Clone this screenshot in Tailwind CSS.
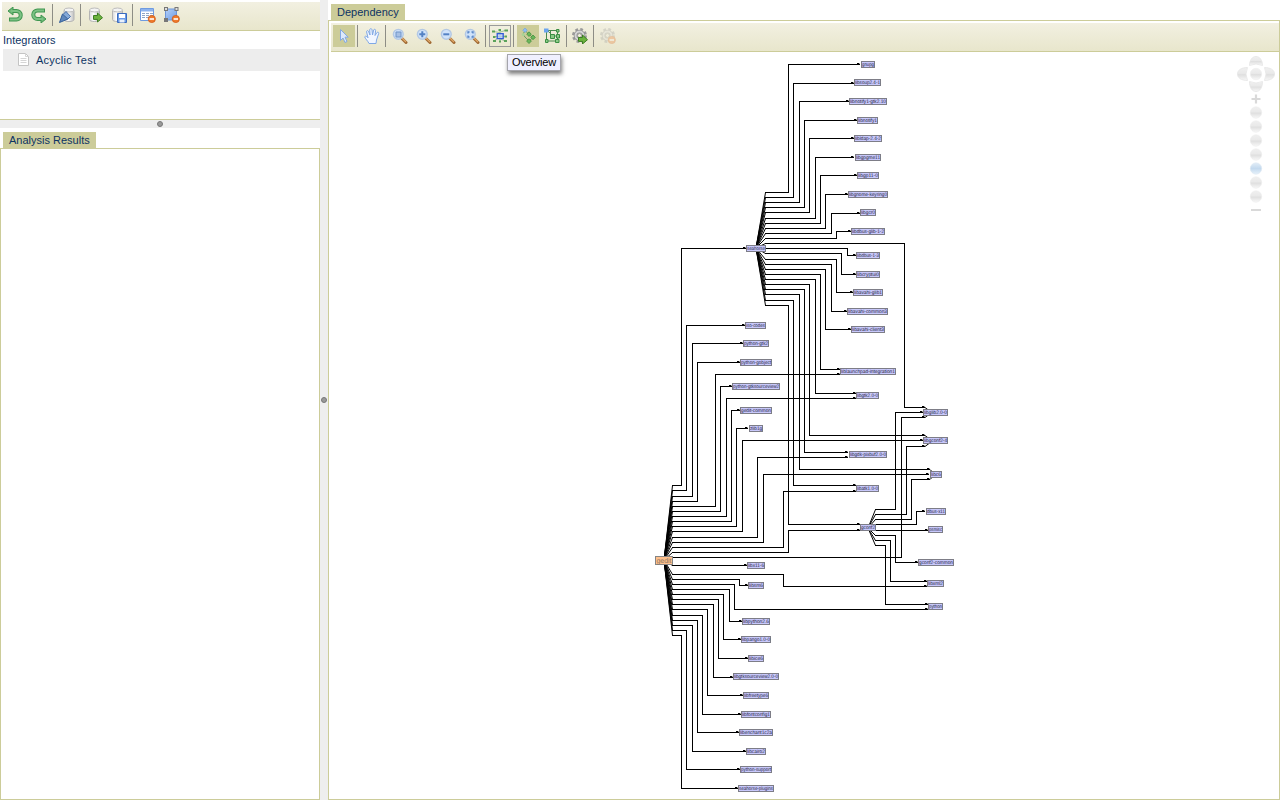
<!DOCTYPE html>
<html lang="en">
<head>
<meta charset="utf-8">
<title>Dependency</title>
<script src="https://cdn.jsdelivr.net/npm/@tailwindcss/browser@4"></script>
</head>
<body class="w-[1280px] h-[800px] overflow-hidden bg-white font-['Liberation_Sans',Arial,sans-serif] text-[11px] leading-[14px] text-[#0d3363]">
<svg width="0" height="0" class="absolute">
  <defs>
    <linearGradient id="gy" x1="0" y1="0" x2="1" y2="0"><stop offset="0" stop-color="#d8d8d8"/><stop offset=".4" stop-color="#fff"/><stop offset="1" stop-color="#c0c0c0"/></linearGradient>
    <linearGradient id="bl" x1="0" y1="0" x2="1" y2="1"><stop offset="0" stop-color="#b4d0f8"/><stop offset="1" stop-color="#6f9de6"/></linearGradient>
    <linearGradient id="ball" x1="0" y1="0" x2="0" y2="1"><stop offset="0" stop-color="#f0f0f0"/><stop offset=".45" stop-color="#e9e9e9"/><stop offset=".55" stop-color="#dfdfdf"/><stop offset="1" stop-color="#f8f8f8"/></linearGradient>
    <linearGradient id="ballb" x1="0" y1="0" x2="0" y2="1"><stop offset="0" stop-color="#e2edf7"/><stop offset=".5" stop-color="#c3d9ee"/><stop offset="1" stop-color="#e6f1fa"/></linearGradient>
    <g id="db"><path d="M1.500 3.500v9c0 1.300 2.200 2 5 2s5-.7 5-2v-9" fill="url(#gy)" stroke="#b4b4b4"/><ellipse cx="6.500" cy="3" rx="5" ry="2" fill="#f4f4f4" stroke="#bcbcbc"/></g>
    <g id="lens"><path d="M10 10.500l4 4" stroke="#a06a34" stroke-width="3" stroke-linecap="round"/><path d="M10 10l4 4" stroke="#e0a868" stroke-width="1.200"/><circle cx="6.300" cy="6.300" r="4.900" fill="#cfe2fa" stroke="#b3c8e4" stroke-width="1.400"/></g>
    <g id="minus"><circle cx="11.800" cy="12" r="3.600" fill="#ee7a2c" stroke="#d35a14" stroke-width=".8"/><path d="M9.600 12h4.400" stroke="#fff" stroke-width="1.600"/></g>
    <g id="gear"><circle cx="7.500" cy="7.500" r="6.200" fill="none" stroke="#9a9a9a" stroke-width="2.600" stroke-dasharray="2.700 2.170"/><circle cx="7.500" cy="7.500" r="4" fill="none" stroke="#8f8f8f" stroke-width="3.600"/><circle cx="7.500" cy="7.500" r="4" fill="none" stroke="#d6d6d6" stroke-width="2"/><circle cx="7.500" cy="7.500" r="2" fill="#f0eedc" stroke="#888" stroke-width=".8"/></g>
    <g id="go"><path d="M6.500 9.500h4V7l5 4.700-5 4.300v-2.600h-4z" fill="#6cb33e" stroke="#3c7d22"/></g>
    <g id="turn"><path d="M3.500 4h6a4 4 0 0 1 0 8.500H2" fill="none" stroke="#3f9650" stroke-width="4"/><path d="M6 0v8L1 4z" fill="#6fb877" stroke="#3f9650"/><path d="M4 4h5.500a4 4 0 0 1 0 8.500H3" fill="none" stroke="#7cc184" stroke-width="2.200"/></g>
  </defs>
</svg>
<div class="flex h-[800px]">
  <aside class="flex w-[320px] flex-col">
    <div class="mt-[2px] ml-[2px] flex h-[29px] items-center border-b border-[#cccc99] bg-linear-to-b from-[#f2f0e1] to-[#e8e6cc] pl-[5px] pb-[2px]">
      <svg class="w-4 h-4" viewBox="0 0 16 16"><use href="#turn"/></svg>
      <svg class="ml-[8px] w-4 h-4" viewBox="0 0 16 16"><use href="#turn" transform="translate(16 16) rotate(180) translate(0 16) scale(1 -1) scale(1 -1) translate(0 -16)"/></svg>
      <i class="ml-[5px] h-[22px] w-px bg-[#8d8d85]"></i>
      <svg class="ml-[6px] w-4 h-4" viewBox="0 0 16 16"><use href="#db" x="3.500"/><path d="M.5 15.500l3-8.500 5.500 5z" fill="#5f87bb" stroke="#345f99"/><path d="M4 7.500l3-3 4.500 5-2.500 2.500z" fill="#85a9d8" stroke="#4770a8"/></svg>
      <i class="ml-[5px] h-[22px] w-px bg-[#8d8d85]"></i>
      <svg class="ml-[7px] w-4 h-4" viewBox="0 0 16 16"><use href="#db"/><use href="#go" x="-1" y="-1"/></svg>
      <svg class="ml-[7px] w-4 h-4" viewBox="0 0 16 16"><use href="#db"/><path d="M6.500 6.500h9v9h-9z" fill="#6b9be8" stroke="#3c6cbd"/><path d="M8 7h6v4H8z" fill="#fff"/><path d="M8.500 12.500h5v3h-5z" fill="#e8f0fb"/></svg>
      <i class="ml-[5px] h-[22px] w-px bg-[#8d8d85]"></i>
      <svg class="ml-[7px] w-4 h-4" viewBox="0 0 16 16"><path d="M.5 1.500h13v12H.5z" fill="#fff" stroke="#6f9be0"/><path d="M1 2h12v2.500H1z" fill="#8db3ee"/><path d="M2 6.500h3m1 0h3m1 0h3m-11 2h3m1 0h3m1 0h3m-11 2h3m1 0h3" stroke="#8fa5c5"/><use href="#minus"/></svg>
      <svg class="ml-[8px] w-4 h-4" viewBox="0 0 16 16"><path d="M1.500 2h11v11h-11z" fill="url(#bl)" stroke="#6c95da"/><path d="M0 0h4v4H0zM10.500 0h4v4h-4zM0 11h4v4H0z" fill="#777"/><path d="M1 1h2v2H1zM11.500 1h2v2h-2z" fill="#ddd"/><use href="#minus"/></svg>
    </div>
    <div class="h-[18px] pt-[2px] pl-[3px]">Integrators</div>
    <div class="ml-[3px] flex h-[22px] items-center bg-[#ededed] pl-[15px]">
      <svg class="w-[11px] h-[13px] -mt-px" viewBox="0 0 11 13"><path d="M.5.500h7l3 3v9H.5z" fill="#fff" stroke="#c4c4c4"/><path d="M7.500.500v3h3M2.500 5.500h6m-6 2h6m-6 2h6" fill="none" stroke="#d5d5d5"/></svg>
      <span class="ml-[7px] tracking-[0.25px]">Acyclic Test</span>
    </div>
    <div class="h-[49px] border-b border-[#cccc99]"></div>
    <div class="flex h-[8px] items-center justify-center bg-[#eee]"><i class="h-[6px] w-[6px] rounded-full border border-[#777] bg-[#999]"></i></div>
    <div class="flex h-[20px] pt-[4px] pl-[3px]"><span class="h-[16px] w-[93px] bg-[#cccc99] pt-[1px] pl-[6px]">Analysis Results</span></div>
    <div class="flex-1 border border-[#cccc99]"></div>
  </aside>
  <div class="flex w-[8px] items-center justify-center bg-[#eee]"><i class="h-[6px] w-[6px] rounded-full border border-[#777] bg-[#999]"></i></div>
  <main class="flex w-[952px] flex-col">
    <div class="flex h-[20px] pt-[4px] pl-[3px]"><span class="h-[16px] w-[74px] bg-[#cccc99] pt-[1px] pl-[6px]">Dependency</span></div>
    <div class="relative flex-1 border border-[#cccc99]">
      <div class="mt-[2px] ml-[2px] flex h-[29px] items-center border-b border-[#cccc99] bg-linear-to-b from-[#f2f0e1] to-[#e8e6cc] pl-[2px] pb-[2px]">
        <div class="flex h-[22px] w-[22px] items-center justify-center bg-[#cccc99]"><svg class="w-4 h-4" viewBox="0 0 16 16"><path d="M4.500 1.500v11l2.500-2.500 2 4.500 2-1-2-4.300h3.200z" fill="#dce9fc" stroke="#83a9e2"/></svg></div>
        <i class="ml-[2px] h-[22px] w-px bg-[#8d8d85]"></i>
        <svg class="ml-[6px] w-4 h-4" viewBox="0 0 16 16"><path d="M5 15.500C4 13 1 10.500.7 8.800c.8-1.300 2.300-.3 3.300 1L2.500 3.500c.5-1.300 1.700-1 2.200.3L6 7 5.700 1.700C6 .300 7.700.300 8 1.700L8.500 7l1.200-5c.5-1.300 2-.8 1.900.5L11 7.500l2-3c.9-.8 2 0 1.700 1L12.500 12l-.5 3.500z" fill="#f1f6ff" stroke="#7fa8e6"/></svg>
        <i class="ml-[5px] h-[22px] w-px bg-[#8d8d85]"></i>
        <svg class="ml-[6px] w-4 h-4" viewBox="0 0 16 16"><use href="#lens"/><path d="M4 4h5v5H4z" fill="#a7c0e4" stroke="#6f94c8"/></svg>
        <svg class="ml-[8px] w-4 h-4" viewBox="0 0 16 16"><use href="#lens"/><path d="M3.300 6.300h6m-3-3v6" stroke="#5482c4" stroke-width="2"/></svg>
        <svg class="ml-[8px] w-4 h-4" viewBox="0 0 16 16"><use href="#lens"/><path d="M3.300 6.300h6" stroke="#5482c4" stroke-width="2"/></svg>
        <svg class="ml-[8px] w-4 h-4" viewBox="0 0 16 16"><use href="#lens"/><path d="M4 5.500V4h1.500M7.500 4H9v1.500M9 7.500V9H7.500M5.500 9H4V7.500" fill="none" stroke="#5482c4" stroke-width="1.300"/></svg>
        <i class="ml-[5px] h-[22px] w-px bg-[#8d8d85]"></i>
        <div class="ml-[3px] flex h-[22px] w-[22px] items-center justify-center border border-[#9b9b9b]"><svg class="w-4 h-4 shrink-0" viewBox="0 0 16 16"><path d="M2 3.500l5 1 6-2M2 13l4-3 7 3M2 8.500h11M8 2v12" fill="none" stroke="#9fc39c"/><path d="M0 2.500h3v2H0zM6.500 1h2.500v2H6.500zM12.500 1.500H16v2h-3.500zM1 12h3v2H1zM1 8h2.500v2H1zM12.500 7.500H15v2h-2.500zM7 12.500h2v2H7zM12 12h3v2h-3z" fill="#5aa35a"/><path d="M5.200 5.700h6v5h-6z" fill="#b9cdf8" fill-opacity=".7" stroke="#2f5bd6" stroke-width="1.300"/></svg></div>
        <i class="ml-[2px] h-[22px] w-px bg-[#8d8d85]"></i>
        <div class="ml-[3px] flex h-[22px] w-[22px] items-center justify-center bg-[#cccc99]"><svg class="w-4 h-4" viewBox="0 0 16 16"><path d="M5 2.500L3 6.500 5 9l4 4M5.500 3L9 6.500l4 3-4 3.500" fill="none" stroke="#6a9a60"/><path d="M5 0l2.200 2.200L5 4.500 2.800 2.200z" fill="#8fbef4" stroke="#6aa0e0" stroke-width=".6"/><circle cx="3.200" cy="6.500" r="1.500" fill="#a9d497"/><path d="M9 3.800l2.300 2.400L9 8.500 6.800 6.200zM13 7l2.300 2.400L13 11.700l-2.200-2.300zM9 10.700l2.400 2.400L9 15.500l-2.400-2.400z" fill="#6bb65b" stroke="#3f8f3c" stroke-width=".8"/></svg></div>
        <svg class="ml-[5px] w-4 h-4" viewBox="0 0 16 16"><path d="M4 2.500h9.500V13H3M2.500 4v9M4 3l5 5h5M6.500 3v5" fill="none" stroke="#478a4c"/><path d="M0 .500h4.500v4H0z" fill="#6ba4ef"/><path d="M6.500 6.500h4v4h-4zM12.500 1.500h2.500v2.500h-2.500zM12.500 6.500h3v3.500h-3zM1.500 11.500H4v3H1.500zM11.500 11.500h3.500v3h-3.500z" fill="#8cca86" stroke="#3a8e43"/></svg>
        <i class="ml-[6px] h-[22px] w-px bg-[#8d8d85]"></i>
        <svg class="ml-[5px] w-4 h-4" viewBox="0 0 16 16"><use href="#gear"/><use href="#go"/></svg>
        <i class="ml-[5px] h-[22px] w-px bg-[#8d8d85]"></i>
        <svg class="ml-[6px] w-4 h-4 opacity-30" viewBox="0 0 16 16"><use href="#gear"/><use href="#minus"/></svg>
      </div>
      <svg id="graph" class="absolute -top-[21px] -left-[329px] h-[800px] w-[1280px] font-['Liberation_Sans',Arial,sans-serif]" viewBox="0 0 1280 800"></svg>
      <div class="absolute top-[33px] left-[178px] h-[17px] w-[54px] border border-[#a5a5ac] bg-[#f0f0ff] pl-1 tracking-[-0.25px] text-black shadow-[1px_3px_4px_rgba(0,0,0,0.5)]">Overview</div>
    </div>
  </main>
</div>
<script>
const NS = 'http://www.w3.org/2000/svg', svg = document.getElementById('graph');
function add(tag, attrs, text) {
  const e = document.createElementNS(NS, tag);
  for (const k in attrs) e.setAttribute(k, attrs[k]);
  if (text) e.textContent = text;
  svg.appendChild(e);
}
// Edge bundles: source centre, fan x, then [exit y, bend x, target y, target x]
const bundles = [
  [756, 248, 765, [[192,788,64,860],[197,793,83,854],[202,799,101,849],[207,804,120,857],[212,809,138,854],[218,815,157,854],[223,820,175,857],[228,825,194,848],[233,831,213,860],[238,836,231,851],[243,904,407,925],[248,847,255,856],[253,841,274,856],[259,836,292,853],[264,831,311,847],[269,825,329,851],[274,820,369,840],[279,815,393,856],[284,809,435,925],[289,804,452,848],[294,799,469,930],[300,793,485,856],[305,788,524,860]]],
  [664, 560, 672, [[485,681,248,746],[490,686,325,745],[496,692,343,743],[501,697,362,740],[506,715,374,840],[511,720,386,732],[516,726,398,856],[521,731,410,740],[526,736,428,748],[531,742,440,923],[537,757,457,848],[542,763,474,929],[547,783,491,856],[552,788,530,860],[557,901,417,925],[565,700,565,747],[574,783,586,927],[579,739,585,748],[584,734,609,928],[589,729,621,742],[594,723,639,741],[599,718,658,748],[604,713,677,733],[609,707,695,743],[615,702,714,741],[620,697,732,739],[625,692,751,746],[630,686,769,740],[635,681,788,738]]],
  [868, 528, 875, [[509,895,412,923],[514,906,446,925],[519,911,479,930],[524,916,511,925],[530,900,530,928],[535,895,562,918],[540,890,581,927],[545,885,604,928]]]
];
for (const [cx, cy, fx, list] of bundles) for (const [y, bx, ty, tx] of list) {
  add('path', {d: `M${cx} ${cy}L${fx}.5 ${y}.5`, stroke: '#000', fill: 'none'});
  add('path', {d: `M${fx} ${y}.5H${bx}.5V${ty}.5H${tx}`, stroke: '#000', fill: 'none', 'shape-rendering': 'crispEdges'});
  add('path', {d: `M${tx - 3} ${ty - 1}h2l1 1.500-1 .500h-2z`, fill: '#000'});
}
for (const [x, y, dx, dy] of [[925,407,4,3],[925,417,4,-3],[925,435,4,3],[925,446,4,-3],[930,469,3,3],[930,479,3,-3]])
  add('path', {d: `M${x} ${y}.5l${dx} ${dy}`, stroke: '#000'});
// Nodes: [left, right, middle y, name]
const nodes = [
  [861,875,64,'gnupg'],[854,881,82,'libsoup2.4-1'],[849,887,101,'libnotify1-gtk2.10'],[857,878,120,'libnotify1'],[854,882,138,'libldap-2.4-2'],[855,881,157,'libgpgme11'],[857,879,175,'libgp11-0'],[848,888,194,'libgnome-keyring0'],[860,876,212,'libgcr0'],[851,885,231,'libdbus-glib-1-2'],[856,880,255,'libdbus-1-3'],[856,880,274,'libcryptui0'],[853,883,292,'libavahi-glib1'],[847,888,311,'libavahi-common3'],[851,885,329,'libavahi-client3'],[840,896,371,'liblaunchpad-integration1'],[856,879,395,'libgtk2.0-0'],[849,887,454,'libgdk-pixbuf2.0-0'],[856,879,488,'libatk1.0-0'],[923,948,412,'libglib2.0-0'],[923,948,440,'libgconf2-4'],[930,942,474,'libc6'],[860,876,527,'gconf2'],[926,946,511,'dbus-x11'],[928,943,529,'psmisc'],[918,954,562,'gconf2-common'],[927,944,583,'libxml2'],[928,943,606,'python'],
  [746,766,248,'seahorse'],[745,766,325,'iso-codes'],[743,769,343,'python-gtk2'],[740,772,362,'python-gobject'],[732,780,386,'python-gtksourceview2'],[740,772,410,'gedit-common'],[749,763,428,'zlib1g'],[747,765,565,'libx11-6'],[748,764,585,'libsm6'],[742,770,621,'libpython2.6'],[741,771,639,'libpango1.0-0'],[748,764,658,'libice6'],[733,779,676,'libgtksourceview2.0-0'],[743,769,695,'libfreetype6'],[741,771,714,'libfontconfig1'],[739,773,732,'libenchant1c2a'],[746,766,751,'libcairo2'],[740,772,769,'python-support'],[738,774,788,'seahorse-plugins']
];
for (const [l, r, y, name] of nodes) {
  add('rect', {x: l + .5, y: y - 2.5, width: r - l - 1, height: 6, fill: '#c8c8fb', stroke: '#7d7d87'});
  add('text', {x: l + 1, y: y + 2.3, 'font-size': 5, fill: '#22223c', textLength: r - l - 2, lengthAdjust: 'spacingAndGlyphs', 'text-rendering': 'geometricPrecision'}, name);
}
add('rect', {x: 655.5, y: 556.5, width: 17, height: 8, fill: '#ffc08c', stroke: '#858585'});
add('text', {x: 656.5, y: 563, 'font-size': 7, fill: '#8a755f', textLength: 15, lengthAdjust: 'spacingAndGlyphs', 'text-rendering': 'geometricPrecision'}, 'gedit');
// Pan pad and zoom steps
const soft = {fill: 'url(#ball)', stroke: '#e5e5e5', 'stroke-width': .8};
add('path', {d: 'M1249.500 65.500c0-5 2.500-9 6.500-9s6.500 4 6.500 9q-6.500-3-13 0z', ...soft});
add('path', {d: 'M1249.500 81.500q6.500 3 13 0c0 6-2.500 10-6.500 10s-6.500-4-6.500-10z', ...soft});
add('path', {d: 'M1247.500 67.500c-6 0-10 2.500-10 6.500s4 6.500 10 6.500q-3-6.500 0-13z', ...soft});
add('path', {d: 'M1264.500 67.500c6 0 10 2.500 10 6.500s-4 6.500-10 6.500q3-6.500 0-13z', ...soft});
for (const y of [74,112.500,126.500,140.500,154.500,168.500,182.500,196.500])
  add('circle', {cx: 1256, cy: y, r: 5.700, fill: y === 168.500 ? 'url(#ballb)' : 'url(#ball)', stroke: y === 168.500 ? '#dbe7f2' : '#ececec', 'stroke-width': .6});
add('path', {d: 'M1251.500 99h9m-4.500-4.500v9', stroke: '#d9d9d9', 'stroke-width': 2.200});
add('path', {d: 'M1251 210h10', stroke: '#d9d9d9', 'stroke-width': 2});
</script>
</body>
</html>
